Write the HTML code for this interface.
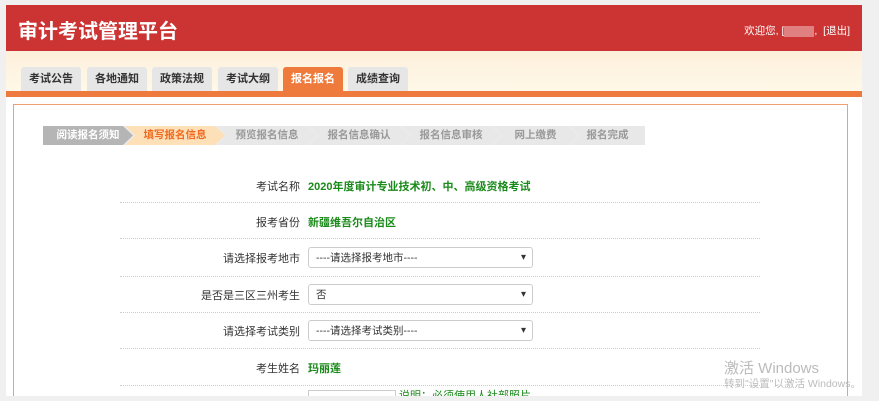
<!DOCTYPE html><html style="width:879px;height:401px;overflow:hidden"><head><meta charset="utf-8"><style>
*{margin:0;padding:0;box-sizing:border-box}
body{width:879px;height:401px;overflow:hidden;background:#f0f0f0;font-family:"Liberation Sans","Noto Sans CJK SC",sans-serif;position:relative;font-size:11px}
#wrap{position:absolute;left:0;top:0;width:879px;height:401px;overflow:hidden}
.abs{position:absolute}
#hdr{left:6px;top:5px;width:856px;height:46px;background:#cc3333}
#hdr h1{position:absolute;left:12px;top:10px;color:#fff;font-size:20px;font-weight:bold}
#wel{right:12px;top:18px;color:#fff;font-size:10.5px}
#nav{left:6px;top:51px;width:856px;height:40px;background:linear-gradient(#fdf0dc,#fff8e8)}
.tab{top:67px;height:24px;width:60px;background:#e6e6e6;border-radius:3px 3px 0 0;text-align:center;line-height:24px;font-weight:bold;color:#333;font-size:11px}
.tab.on{background:#ee7a3c;color:#fff}
#bar{left:6px;top:91px;width:856px;height:6px;background:#ef7a3e}
#main{left:6px;top:97px;width:856px;height:304px;background:#fff}
#panel{left:13px;top:104px;width:835px;height:310px;border:1px solid #f0a070;background:#fff}
.st{top:126px;height:19px;line-height:19px;font-weight:bold;font-size:10.5px;text-align:center;clip-path:polygon(0 0,calc(100% - 10px) 0,100% 50%,calc(100% - 10px) 100%,0 100%,10px 50%)}
.lbl{width:180px;left:120px;text-align:right;color:#333;font-size:11px}
.val{left:308px;color:#1a8a1a;font-weight:bold;font-size:11px}
.ln{left:120px;width:640px;border-top:1px dotted #ccc}
.sel{left:308px;width:225px;height:21px;border:1px solid #ccc;border-radius:3px;background:#fff;font-size:10.5px;color:#333;padding-left:7px;line-height:20px}
.sel:after{content:"▾";position:absolute;right:6px;top:0;font-size:10px}
</style></head><body><div id="wrap">
<div id="hdr" class="abs"><h1>审计考试管理平台</h1><div id="wel" class="abs">欢迎您, [<span style="display:inline-block;width:30px;height:11px;background:#e08080;vertical-align:middle"></span>, &nbsp;[退出]</div></div>
<div id="nav" class="abs"></div>
<div class="abs tab" style="left:21px">考试公告</div>
<div class="abs tab" style="left:87px">各地通知</div>
<div class="abs tab" style="left:152px">政策法规</div>
<div class="abs tab" style="left:218px">考试大纲</div>
<div class="abs tab on" style="left:283px">报名报名</div>
<div class="abs tab" style="left:348px">成绩查询</div>
<div id="bar" class="abs"></div>
<div id="main" class="abs"></div>
<div id="panel" class="abs"></div>
<div class="abs" style="left:43px;top:126px;width:602px;height:19px;background:#ebebeb"></div>
<div class="abs st" style="left:43px;width:90px;background:#b5b5b5;color:#fff;clip-path:polygon(0 0,calc(100% - 10px) 0,100% 50%,calc(100% - 10px) 100%,0 100%)">阅读报名须知</div>
<div class="abs st" style="left:125px;width:100px;background:#fde0b8;color:#ef6a20">填写报名信息</div>
<div class="abs st" style="left:217px;width:100px;background:#e8e8e8;color:#999">预览报名信息</div>
<div class="abs st" style="left:309px;width:100px;background:#e8e8e8;color:#999">报名信息确认</div>
<div class="abs st" style="left:401px;width:100px;background:#e8e8e8;color:#999">报名信息审核</div>
<div class="abs st" style="left:493px;width:85px;background:#e8e8e8;color:#999">网上缴费</div>
<div class="abs st" style="left:570px;width:75px;background:#e8e8e8;color:#999;clip-path:polygon(0 0,100% 0,100% 100%,0 100%,10px 50%)">报名完成</div>

<div class="abs lbl" style="top:178px">考试名称</div><div class="abs val" style="top:178px">2020年度审计专业技术初、中、高级资格考试</div>
<div class="abs ln" style="top:202px"></div>
<div class="abs lbl" style="top:214px">报考省份</div><div class="abs val" style="top:214px">新疆维吾尔自治区</div>
<div class="abs ln" style="top:238px"></div>
<div class="abs lbl" style="top:250px">请选择报考地市</div><div class="abs sel" style="top:247px">----请选择报考地市----</div>
<div class="abs ln" style="top:276px"></div>
<div class="abs lbl" style="top:287px">是否是三区三州考生</div><div class="abs sel" style="top:284px">否</div>
<div class="abs ln" style="top:312px"></div>
<div class="abs lbl" style="top:323px">请选择考试类别</div><div class="abs sel" style="top:320px">----请选择考试类别----</div>
<div class="abs ln" style="top:348px"></div>
<div class="abs lbl" style="top:360px">考生姓名</div><div class="abs val" style="top:360px">玛丽莲</div>
<div class="abs ln" style="top:385px"></div>
<div class="abs" style="left:308px;top:390px;width:88px;height:8px;border:1px solid #ccc;border-bottom:none;background:#fff"></div>
<div class="abs" style="left:399px;top:387px;color:#1a8a1a;font-size:11px">说明：必须使用人社部照片</div>
<div class="abs" style="left:724px;top:357px;color:#bbb;font-size:15px">激活 Windows</div>
<div class="abs" style="left:724px;top:376px;color:#bbb;font-size:10.5px">转到"设置"以激活 Windows。</div>
<div class="abs" style="left:862px;top:0;width:17px;height:401px;background:#f0f0f0"></div>
<div class="abs" style="left:0;top:396px;width:879px;height:5px;background:#f0f0f0"></div>
</div></body></html>
